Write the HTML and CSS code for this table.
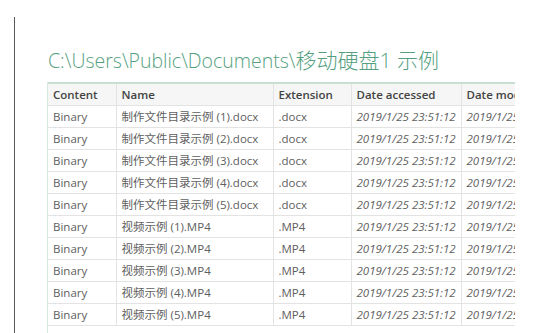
FILE: index.html
```html
<!DOCTYPE html>
<html>
<head>
<meta charset="utf-8">
<link rel="stylesheet" href="styles.css">
</head>
<body>
<div class="page">
  <div class="rule"></div>
  <div class="main">
    <h1 class="title">C:\Users\Public\Documents\<span class="title-cjk">移动硬盘1 示例</span></h1>
    <div class="grid-wrap">
      <table class="grid">
        <colgroup>
          <col class="c-content"><col class="c-name"><col class="c-ext"><col class="c-acc"><col class="c-mod">
        </colgroup>
        <thead>
          <tr><th>Content</th><th>Name</th><th>Extension</th><th>Date accessed</th><th>Date modified</th></tr>
        </thead>
        <tbody>
          <tr><td>Binary</td><td>制作文件目录示例 (1).docx</td><td>.docx</td><td class="date">2019/1/25 23:51:12</td><td class="date">2019/1/25 23:51:12</td></tr>
          <tr><td>Binary</td><td>制作文件目录示例 (2).docx</td><td>.docx</td><td class="date">2019/1/25 23:51:12</td><td class="date">2019/1/25 23:51:12</td></tr>
          <tr><td>Binary</td><td>制作文件目录示例 (3).docx</td><td>.docx</td><td class="date">2019/1/25 23:51:12</td><td class="date">2019/1/25 23:51:12</td></tr>
          <tr><td>Binary</td><td>制作文件目录示例 (4).docx</td><td>.docx</td><td class="date">2019/1/25 23:51:12</td><td class="date">2019/1/25 23:51:12</td></tr>
          <tr><td>Binary</td><td>制作文件目录示例 (5).docx</td><td>.docx</td><td class="date">2019/1/25 23:51:12</td><td class="date">2019/1/25 23:51:12</td></tr>
          <tr><td>Binary</td><td>视频示例 (1).MP4</td><td>.MP4</td><td class="date">2019/1/25 23:51:12</td><td class="date">2019/1/25 23:51:12</td></tr>
          <tr><td>Binary</td><td>视频示例 (2).MP4</td><td>.MP4</td><td class="date">2019/1/25 23:51:12</td><td class="date">2019/1/25 23:51:12</td></tr>
          <tr><td>Binary</td><td>视频示例 (3).MP4</td><td>.MP4</td><td class="date">2019/1/25 23:51:12</td><td class="date">2019/1/25 23:51:12</td></tr>
          <tr><td>Binary</td><td>视频示例 (4).MP4</td><td>.MP4</td><td class="date">2019/1/25 23:51:12</td><td class="date">2019/1/25 23:51:12</td></tr>
          <tr><td>Binary</td><td>视频示例 (5).MP4</td><td>.MP4</td><td class="date">2019/1/25 23:51:12</td><td class="date">2019/1/25 23:51:12</td></tr>
        </tbody>
      </table>
      <div class="tail"></div>
    </div>
  </div>
</div>
</body>
</html>
```
FILE: styles.css
```css
html, body {
  margin: 0;
  padding: 0;
  background: #ffffff;
  height: 100%;
  overflow: hidden;
}
.page {
  display: flex;
  height: 333px;
}
.rule {
  width: 1px;
  margin-left: 14px;
  margin-top: 17px;
  background: #5a5a5a;
}
.main {
  margin-left: 32px;
  display: flex;
  flex-direction: column;
}
.title {
  margin: 46px 0 0 1px;
  font-family: "Open Sans", "Noto Sans CJK SC", sans-serif;
  font-weight: 300;
  font-size: 19.5px;
  line-height: 28px;
  height: 28px;
  color: #559f80;
  white-space: nowrap;
}
.title-cjk {
  font-size: 21px;
}
.grid-wrap {
  margin-top: 8px;
  width: 467px;
  overflow: hidden;
  flex: 1;
  border-left: 1px solid #d5e9dd;
  display: flex;
  flex-direction: column;
}
.grid {
  border-collapse: collapse;
  table-layout: fixed;
  width: 580px;
  font-family: "Open Sans", "Noto Sans CJK SC", sans-serif;
  font-size: 11.5px;
  color: #606060;
}
.c-content { width: 68px; }
.c-name { width: 157px; }
.c-ext { width: 78px; }
.c-acc { width: 110px; }
.c-mod { width: 167px; }
.grid th, .grid td {
  height: 21px;
  padding: 0 0 0 5px;
  line-height: 14px;
  text-align: left;
  white-space: nowrap;
  overflow: hidden;
  border-right: 1px solid #e3e3e3;
  border-bottom: 1px solid #e3e3e3;
}
.grid th {
  font-weight: 600;
  color: #444444;
  background: #f5f6f5;
  border-top: 2px solid #c8e0d2;
}
.grid .date {
  font-style: italic;
}
.tail {
  flex: 1;
}
```
